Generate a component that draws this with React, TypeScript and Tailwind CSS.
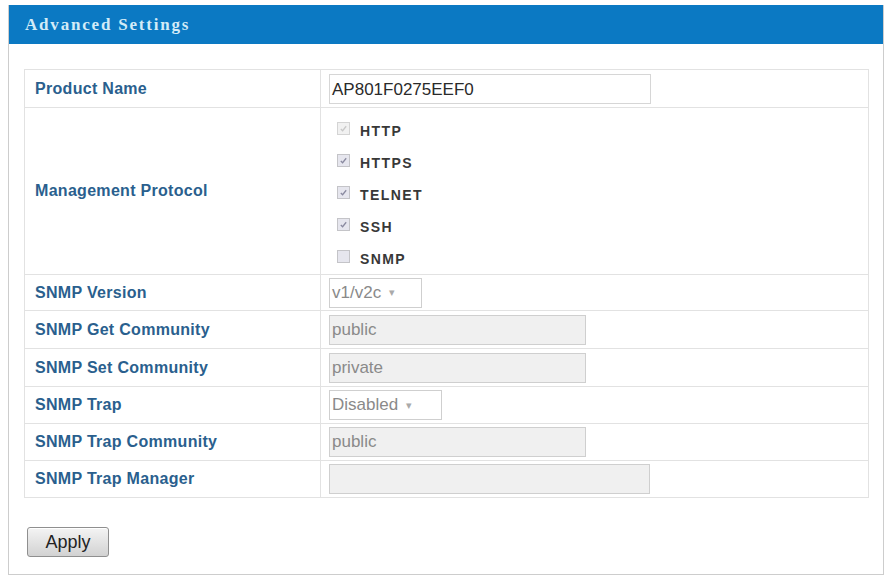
import React from 'react';

const labelCls =
  'pl-[10px] pr-2 text-[16px] font-bold tracking-[0.3px] text-[#2a5f8e] border border-[#e2e2e2] w-[296px] align-middle';
const valueCls = 'pl-[8px] border border-[#e2e2e2] align-middle';

const Check = ({ checked, disabled }: { checked: boolean; disabled?: boolean }) => (
  <span
    className={`inline-flex h-[13px] w-[13px] items-center justify-center border ${
      disabled ? 'border-[#d4d4d4] bg-[#f1f1f1]' : 'border-[#c4c4c8] bg-[#e6e6ee]'
    }`}
  >
    {checked && (
      <svg width="9" height="9" viewBox="0 0 10 10">
        <path
          d="M2 5.5 L4 7.5 L8 2.5"
          fill="none"
          stroke={disabled ? '#c8c8c8' : '#8a8aa0'}
          strokeWidth="1.4"
        />
      </svg>
    )}
  </span>
);

const protocols = [
  { name: 'HTTP', checked: true, disabled: true },
  { name: 'HTTPS', checked: true },
  { name: 'TELNET', checked: true },
  { name: 'SSH', checked: true },
  { name: 'SNMP', checked: false },
];

const GrayInput = ({ value, w }: { value: string; w: string }) => (
  <div
    className={`${w} h-[30px] border border-[#cfcfcf] bg-[#f0f0f0] pl-[2px] text-[17px] leading-[28px] text-[#8a8a8a]`}
  >
    {value}
  </div>
);

const Select = ({ value, w }: { value: string; w: string }) => (
  <div
    className={`${w} flex h-[30px] items-center border border-[#cfcfcf] bg-white pl-[2px] text-[17px] text-[#8a8a8a]`}
  >
    <span>{value}</span>
    <span className="ml-[8px] text-[11px] text-[#aaa]">▾</span>
  </div>
);

export default function App() {
  return (
    <div className="min-h-[578px] bg-white pt-[5px] pl-[8px] pr-[3px] font-['Liberation_Sans',Arial,sans-serif]">
      <div className="h-[570px] border-x border-b border-[#cdcdcd]">
        <div className="flex h-[39px] items-center bg-[#0b79c3] pl-[16px] font-['Liberation_Serif',serif] text-[17px] font-bold tracking-[1.8px] text-[#d3ebf7]">
          Advanced Settings
        </div>
        <div className="px-[15px] pt-[25px]">
          <table className="w-[845px] border-collapse">
            <tbody>
              <tr className="h-[38px]">
                <td className={labelCls}>Product Name</td>
                <td className={valueCls}>
                  <div className="h-[30px] w-[322px] border border-[#d6d6d6] pl-[2px] text-[17px] leading-[30px] text-[#2a2a2a]">
                    AP801F0275EEF0
                  </div>
                </td>
              </tr>
              <tr className="h-[167px]">
                <td className={labelCls}>Management Protocol</td>
                <td className={valueCls}>
                  <div className="flex flex-col gap-[14px] pl-[8px] pt-[2px]">
                    {protocols.map((p) => (
                      <div key={p.name} className="flex h-[18px] items-center gap-[10px]">
                        <Check checked={p.checked} disabled={p.disabled} />
                        <span className="mt-[6px] text-[14px] font-bold tracking-[1.4px] text-[#383838]">
                          {p.name}
                        </span>
                      </div>
                    ))}
                  </div>
                </td>
              </tr>
              <tr className="h-[36px]">
                <td className={labelCls}>SNMP Version</td>
                <td className={valueCls}>
                  <Select value="v1/v2c" w="w-[93px]" />
                </td>
              </tr>
              <tr className="h-[38px]">
                <td className={labelCls}>SNMP Get Community</td>
                <td className={valueCls}>
                  <GrayInput value="public" w="w-[257px]" />
                </td>
              </tr>
              <tr className="h-[38px]">
                <td className={labelCls}>SNMP Set Community</td>
                <td className={valueCls}>
                  <GrayInput value="private" w="w-[257px]" />
                </td>
              </tr>
              <tr className="h-[37px]">
                <td className={labelCls}>SNMP Trap</td>
                <td className={valueCls}>
                  <Select value="Disabled" w="w-[113px]" />
                </td>
              </tr>
              <tr className="h-[37px]">
                <td className={labelCls}>SNMP Trap Community</td>
                <td className={valueCls}>
                  <GrayInput value="public" w="w-[257px]" />
                </td>
              </tr>
              <tr className="h-[37px]">
                <td className={labelCls}>SNMP Trap Manager</td>
                <td className={valueCls}>
                  <GrayInput value="" w="w-[321px]" />
                </td>
              </tr>
            </tbody>
          </table>
          <button className="mt-[29px] ml-[3px] h-[30px] w-[82px] rounded-[3px] border border-[#8f8f8f] bg-gradient-to-b from-[#f4f4f4] to-[#d2d2d2] text-[18px] text-[#222] shadow-[inset_0_1px_0_#fff]">
            Apply
          </button>
        </div>
      </div>
    </div>
  );
}
